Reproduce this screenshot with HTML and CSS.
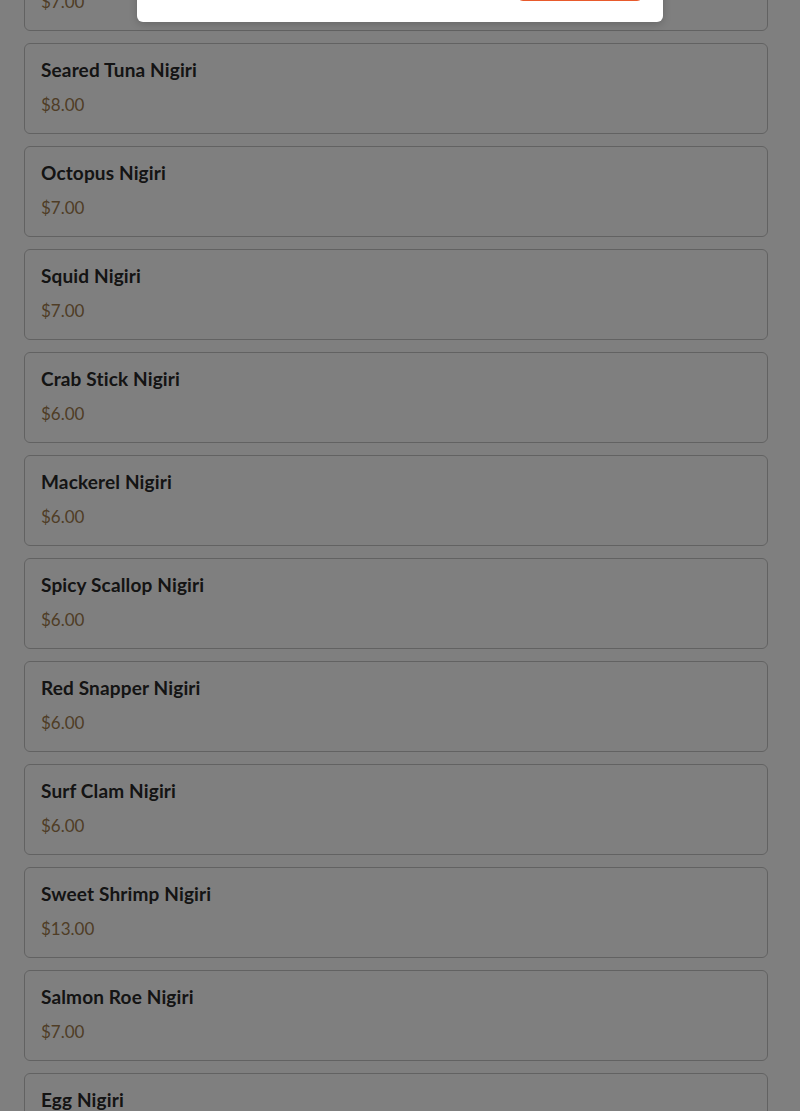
FILE: index.html
```html
<!DOCTYPE html>
<html>
<head>
<meta charset="utf-8">
<link rel="stylesheet" href="styles.css">
</head>
<body>
<main class="menu">
  <div class="item"><div class="name">Salmon Nigiri</div><div class="price">$7.00</div></div>
  <div class="item"><div class="name">Seared Tuna Nigiri</div><div class="price">$8.00</div></div>
  <div class="item"><div class="name">Octopus Nigiri</div><div class="price">$7.00</div></div>
  <div class="item"><div class="name">Squid Nigiri</div><div class="price">$7.00</div></div>
  <div class="item"><div class="name">Crab Stick Nigiri</div><div class="price">$6.00</div></div>
  <div class="item"><div class="name">Mackerel Nigiri</div><div class="price">$6.00</div></div>
  <div class="item"><div class="name">Spicy Scallop Nigiri</div><div class="price">$6.00</div></div>
  <div class="item"><div class="name">Red Snapper Nigiri</div><div class="price">$6.00</div></div>
  <div class="item"><div class="name">Surf Clam Nigiri</div><div class="price">$6.00</div></div>
  <div class="item"><div class="name">Sweet Shrimp Nigiri</div><div class="price">$13.00</div></div>
  <div class="item"><div class="name">Salmon Roe Nigiri</div><div class="price">$7.00</div></div>
  <div class="item"><div class="name">Egg Nigiri</div><div class="price">$5.00</div></div>
</main>
<div class="overlay"></div>
<div class="modal">
  <div class="modal-body">Add to order?</div>
  <div class="modal-footer"><button class="btn">Add</button></div>
</div>
</body>
</html>
```
FILE: styles.css
```css
html, body { margin: 0; padding: 0; background: #ffffff; overflow: hidden; }
body { font-family: Lato, "Noto Sans", sans-serif; }
.menu {
  display: flex;
  flex-direction: column;
  gap: 12px;
  padding: 0 32px 0 24px;
  margin-top: -60px;
}
.item {
  border: 1px solid #c4c4c4;
  border-radius: 6px;
  padding: 14px 16px 17px;
  height: 91px;
  box-sizing: border-box;
  display: flex;
  flex-direction: column;
  gap: 12px;
}
.name {
  font-size: 19px;
  font-weight: 700;
  line-height: 24px;
  letter-spacing: 0.15px;
  color: #282828;
}
.price {
  font-size: 17px;
  line-height: 22px;
  color: #9e7a4c;
}
.overlay {
  position: fixed;
  inset: 0;
  background: rgba(0, 0, 0, 0.5);
}
.modal {
  position: fixed;
  left: 137px;
  width: 526px;
  top: -178px;
  height: 200px;
  box-sizing: border-box;
  background: #ffffff;
  border-radius: 6px;
  box-shadow: 0 2px 8px rgba(0,0,0,0.2);
  display: flex;
  flex-direction: column;
  justify-content: space-between;
  padding: 20px 20px 20px;
}
.modal-body { font-size: 18px; color: #333; }
.modal-footer { display: flex; justify-content: flex-end; }
.btn {
  width: 126px;
  height: 40px;
  margin-bottom: 1px;
  border: none;
  border-radius: 6px;
  background: #e85a2c;
  color: #fff;
  font-family: inherit;
  font-size: 16px;
}
```
